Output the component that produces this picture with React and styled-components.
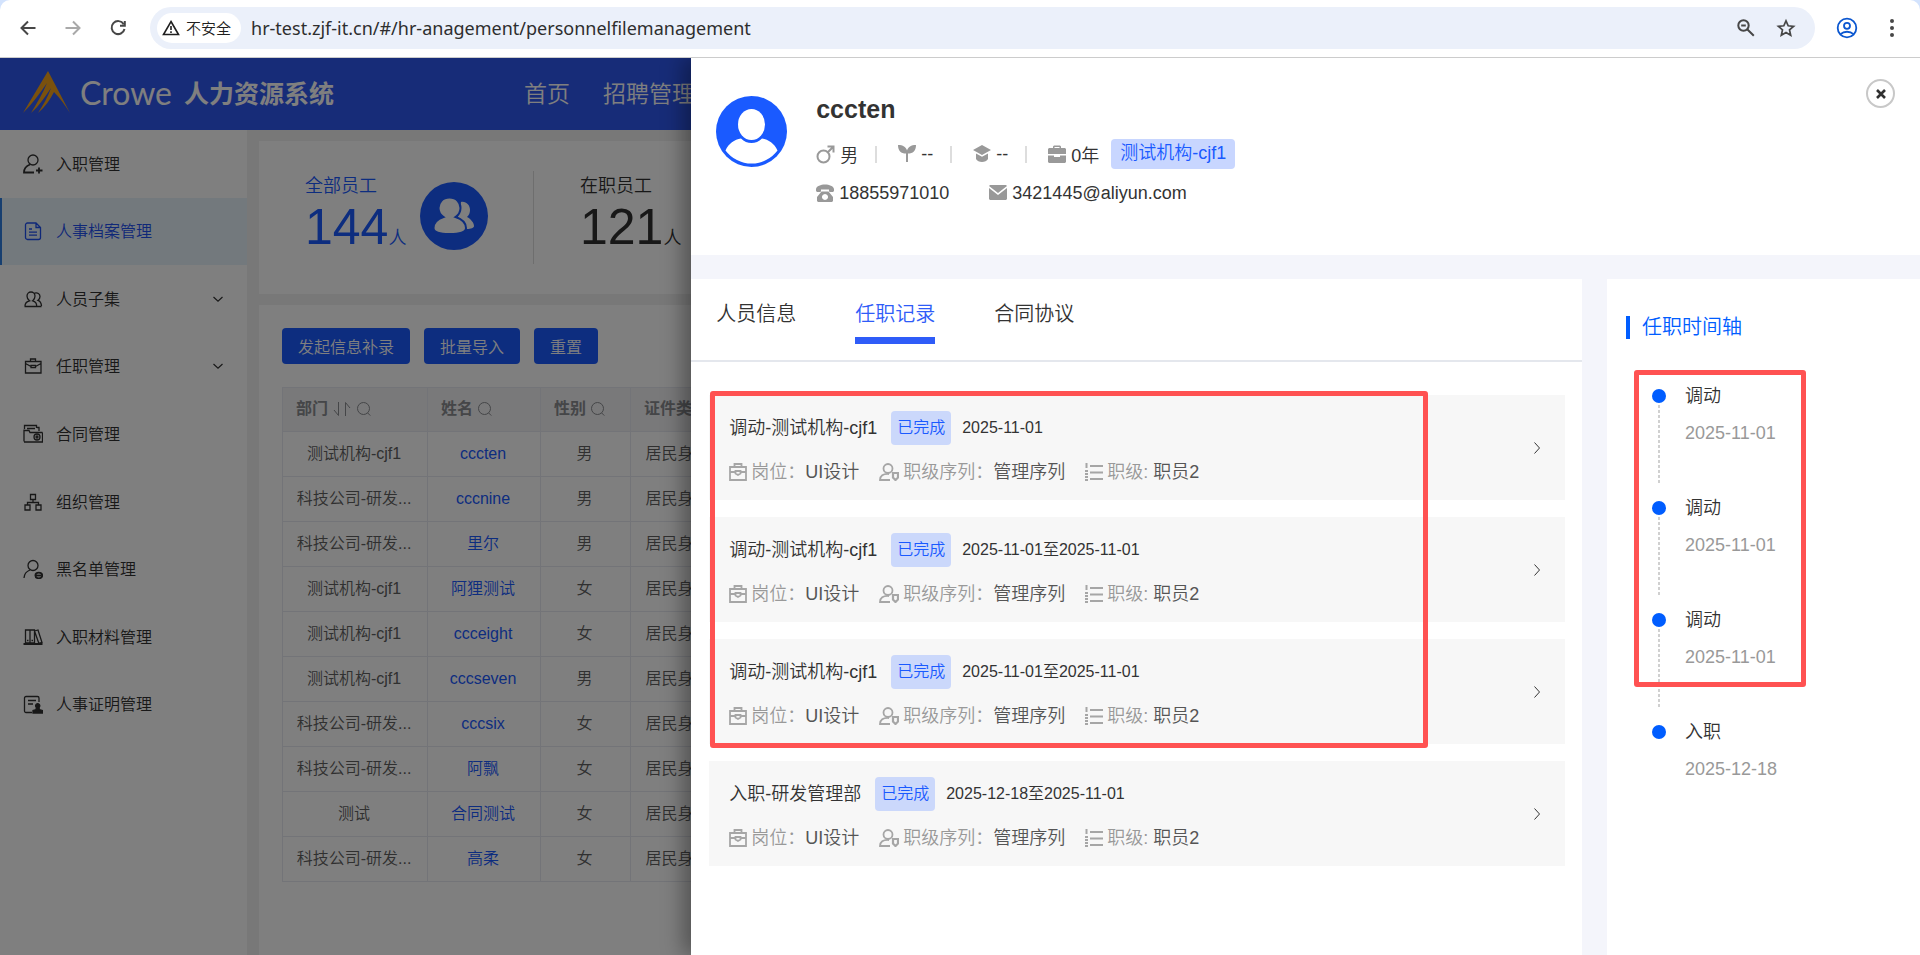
import React from "react";
import styled, { createGlobalStyle, css } from "styled-components";

const GlobalStyle = createGlobalStyle`
  * {
    box-sizing: border-box;
  }
  body {
    margin: 0;
    font-family: "Liberation Sans", "Noto Sans CJK SC", sans-serif;
    font-size: 16px;
    font-weight: 350;
    color: #333;
    overflow: hidden;
  }
  button, input {
    font-family: inherit;
    font-weight: inherit;
  }
  a {
    color: inherit;
    text-decoration: none;
  }
`;

const Page = styled.div`
  display: flex;
  flex-direction: column;
  height: 100vh;
  background: #d3e3fd;
`;

/* browser toolbar */
const Toolbar = styled.div`
  display: flex;
  align-items: center;
  height: 58px;
  padding: 0 16px 2px 16px;
  background: #fff;
  border-bottom: 1px solid #ccc;
  border-radius: 10px 10px 0 0;
`;

const ToolButton = styled.button`
  display: flex;
  align-items: center;
  justify-content: center;
  width: 24px;
  height: 24px;
  margin-right: ${p => p.$gap || 0}px;
  padding: 0;
  border: 0;
  background: none;
  color: ${p => p.$color || "#474747"};
`;

const AddressBar = styled.div`
  display: flex;
  align-items: center;
  flex: 1;
  height: 42px;
  margin: 0 20px 0 20px;
  padding: 0 17px 0 7px;
  border-radius: 21px;
  background: #ebf0fa;
`;

const Insecure = styled.button`
  display: flex;
  align-items: center;
  gap: 6px;
  height: 30px;
  padding: 0 10px 0 5px;
  border: 0;
  border-radius: 15px;
  background: #fff;
  color: #1f1f1f;
  font-size: 15px;
`;

const Url = styled.input`
  flex: 1;
  margin-left: 10px;
  padding: 0;
  border: 0;
  outline: 0;
  background: none;
  color: #2e2e2e;
  font-family: "Noto Sans", sans-serif;
  font-size: 18px;
  font-weight: 400;
`;

const Viewport = styled.div`
  position: relative;
  display: flex;
  flex-direction: column;
  flex: 1;
  min-height: 0;
  overflow: hidden;
  background: #f0f0f0;
`;

/* app header */
const Header = styled.header`
  display: flex;
  align-items: center;
  height: 72px;
  padding: 0 0 4px 23px;
  background: #2f58f0;
  color: #fff;
`;

const Brand = styled.span`
  margin-left: 10px;
  font-family: Lato, sans-serif;
  font-size: 32px;
  font-weight: 400;
`;

const SystemName = styled.h1`
  width: 340px;
  margin: 0 0 0 12px;
  font-size: 25px;
  font-weight: 700;
`;

const Nav = styled.nav`
  display: flex;
  gap: 33px;
  font-size: 23px;
  white-space: nowrap;
`;

const Body = styled.div`
  display: flex;
  flex: 1;
  min-height: 0;
`;

const Sidebar = styled.nav`
  width: 247px;
  flex-shrink: 0;
  background: #fff;
`;

const Menu = styled.ul`
  display: grid;
  grid-template-rows: repeat(9, 1fr);
  height: 608px;
  margin: 0;
  padding: 0;
  list-style: none;
`;

const MenuLink = styled.a`
  display: flex;
  align-items: center;
  gap: 13px;
  height: 100%;
  padding: 0 23px 0 21px;
  border-left: 2px solid transparent;
  color: #303030;
  ${p => p.$active && css`
    border-color: #2f7fe0;
    background: #e6f3fb;
    color: #1f50f0;
  `}
`;

const MenuText = styled.span`
  flex: 1;
  padding-bottom: 2px;
`;

const Main = styled.main`
  display: flex;
  flex-direction: column;
  flex: 1;
  min-width: 0;
  gap: 11px;
  padding: 11px 12px 0;
`;

const Card = styled.section`
  background: #fff;
  overflow: hidden;
`;

const Stats = styled(Card)`
  display: flex;
  height: 153px;
  padding: 30px 0 0 46px;
`;

const Stat = styled.div`
  display: flex;
  gap: 14px;
  width: 275px;
  color: ${p => p.$active ? "#1a5aff" : "#303030"};
  font-size: 18px;
`;

const StatRule = styled.div`
  width: 1px;
  height: 93px;
  margin-left: auto;
  margin-right: 46px;
  background: #dcdcdc;
`;

const StatValue = styled.div`
  line-height: 30px;
`;

const Big = styled.span`
  font-size: 50px;
  line-height: 52px;
`;

const StatIcon = styled.svg`
  margin-top: 11px;
`;

const TableCard = styled(Card)`
  flex: 1;
  padding: 23px 23px 0;
`;

const Actions = styled.div`
  display: flex;
  gap: 14px;
  margin-bottom: 23px;
`;

const Action = styled.button`
  height: 36px;
  padding: 0 16px;
  border: 0;
  border-radius: 4px;
  background: #1a5aff;
  color: #fff;
  font-size: 16px;
`;

const Table = styled.table`
  width: 100%;
  border-collapse: collapse;
  table-layout: fixed;
  border: 1px solid #e6e8f0;
  color: #606060;
  line-height: 22px;
`;

const Th = styled.th`
  width: ${p => p.$w ? `${p.$w}px` : "auto"};
  height: 44px;
  padding: 0 13px 2px;
  border: 1px solid #e6e8f0;
  background: #f2f2f4;
  color: #8a8c90;
  text-align: left;
  white-space: nowrap;
`;

const ThInner = styled.span`
  display: flex;
  align-items: center;
  gap: 4px;
`;

const Td = styled.td`
  height: 45px;
  padding: 0 15px 1px 13px;
  border: 1px solid #e6e8f0;
  text-align: center;
  white-space: nowrap;
`;

const NameLink = styled.a`
  color: #1a5aff;
`;

/* drawer */
const Mask = styled.div`
  position: absolute;
  inset: 0;
  background: rgba(0, 0, 0, 0.5);
`;

const Drawer = styled.aside`
  position: absolute;
  top: 0;
  right: 0;
  bottom: 0;
  display: flex;
  flex-direction: column;
  gap: 24px;
  width: 64%;
  background: #f4f5fb;
  box-shadow: -8px 0 20px rgba(0, 0, 0, 0.35);
`;

const Profile = styled.section`
  display: flex;
  align-items: flex-start;
  height: 197px;
  padding: 21px 25px 0 25px;
  background: #fff;
`;

const Avatar = styled.svg`
  margin-top: 17px;
  flex-shrink: 0;
`;

const ProfileInfo = styled.div`
  flex: 1;
  margin: 14px 0 0 29px;
  font-size: 18px;
`;

const Name = styled.h2`
  margin: 0;
  font-size: 25px;
  line-height: 32px;
`;

const Facts = styled.div`
  display: flex;
  align-items: center;
  height: ${p => p.$h}px;
  margin-top: ${p => p.$top}px;
`;

const Fact = styled.span`
  display: flex;
  align-items: center;
  gap: 5px;
  margin-right: ${p => p.$gap}px;
`;

const FactRule = styled.span`
  width: 2px;
  height: 17px;
  margin-right: 21px;
  background: #ddd;
`;

const OrgTag = styled.span`
  height: 30px;
  padding: 0 9px;
  border-radius: 4px;
  background: #c8d6ff;
  color: #1a5aff;
  line-height: 28px;
`;

const Close = styled.button`
  display: flex;
  align-items: center;
  justify-content: center;
  width: 29px;
  height: 29px;
  padding: 0;
  border: 2px solid #c8c8c8;
  border-radius: 50%;
  background: #fff;
  color: #303030;
`;

const Panels = styled.div`
  display: flex;
  flex: 1;
  gap: 25px;
`;

const RecordPanel = styled.section`
  position: relative;
  flex: 1;
  background: #fff;
`;

const Tabs = styled.div`
  display: flex;
  gap: 59px;
  height: 83px;
  padding: 20px 25px 0;
  border-bottom: 2px solid #e4e7ed;
`;

const Tab = styled.button`
  height: 45px;
  padding: 0 0 8px;
  border: 0;
  border-bottom: 7px solid ${p => p.$active ? "#2f5cf8" : "transparent"};
  background: none;
  color: ${p => p.$active ? "#2f5cf8" : "#333"};
  font-size: 20px;
  line-height: 30px;
`;

const Records = styled.div`
  display: flex;
  flex-direction: column;
  gap: 17px;
  padding: 33px 17px 0 18px;
`;

const Record = styled.article`
  display: flex;
  align-items: center;
  justify-content: space-between;
  height: 105px;
  padding: 0 22px 0 20px;
  background: #f7f7f7;
`;

const RecordHead = styled.div`
  display: flex;
  align-items: center;
  height: 34px;
  font-size: 18px;
  line-height: 34px;
`;

const Status = styled.span`
  margin: 0 11px 0 14px;
  padding: 0 6px;
  border-radius: 4px;
  background: #cbd8fb;
  color: #1a5aff;
  font-size: 16px;
`;

const RecordDate = styled.time`
  font-size: 16px;
`;

const RecordMeta = styled.dl`
  display: flex;
  gap: 20px;
  margin: 15px 0 0;
  font-size: 18px;
  line-height: 24px;
`;

const Meta = styled.div`
  display: flex;
  align-items: center;
`;

const MetaIcon = styled.svg`
  margin-right: 4px;
  fill: none;
  stroke: #a6a6a6;
`;

const MetaLabel = styled.dt`
  color: #999;
  white-space: pre;
`;

const MetaValue = styled.dd`
  margin: 0;
  color: #555;
`;

const TimelinePanel = styled.section`
  position: relative;
  width: 313px;
  padding: 37px 19px 0;
  background: #fff;
`;

const TimelineTitle = styled.h3`
  margin: 0 0 44px;
  padding-left: 12px;
  border-left: 4px solid #005dff;
  color: #005dff;
  font-size: 20px;
  font-weight: inherit;
  line-height: 23px;
`;

const Timeline = styled.ol`
  margin: 0;
  padding: 0 0 0 26px;
  list-style: none;
`;

const TimelineItem = styled.li`
  display: flex;
  gap: 19px;
  height: 112px;
`;

const Rail = styled.div`
  display: flex;
  flex-direction: column;
  align-items: center;
  gap: 2px;
  padding-top: 6px;
`;

const Dot = styled.span`
  width: 14px;
  height: 14px;
  border-radius: 50%;
  background: #005dff;
`;

const Dashes = styled.span`
  width: 2px;
  height: 80px;
  background: repeating-linear-gradient(#d0d0d0 0 3px, transparent 3px 5px);
`;

const Event = styled.div`
  font-size: 18px;
  line-height: 26px;
`;

const EventDate = styled.time`
  display: block;
  margin-top: 11px;
  color: #999;
`;

/* red frames lie over the records and the timeline */
const Frame = styled.div`
  position: absolute;
  top: ${p => p.$top}px;
  left: ${p => p.$left}px;
  width: ${p => p.$w}px;
  height: ${p => p.$h}px;
  border: 5px solid #ff5252;
  border-radius: 3px;
  pointer-events: none;
`;

const Line = ({ size = 20, box = 20, w = 1.3, children }) => (
  <svg width={size} height={size} viewBox={`0 0 ${box} ${box}`} fill="none" stroke="currentColor" strokeWidth={w}>
    {children}
  </svg>
);

const Solid = ({ size = 18, children }) => (
  <svg width={size} height={size} viewBox="0 0 18 18" fill="#999">
    {children}
  </svg>
);

const SearchIcon = () => (
  <Line size={16} box={16} w={1}>
    <circle cx="7.5" cy="7.5" r="6" />
    <path d="M11.5 11.8l2.8 2.8" />
  </Line>
);

const SortIcon = () => (
  <Line size={20} box={20} w={1}>
    <path d="M6.5 3v13.5L2 11M13.5 17V3.500L18 9" />
  </Line>
);

const ChevronDown = () => (
  <Line size={12} box={12} w={1.2}>
    <path d="M1.500 4L6 8.200 10.500 4" />
  </Line>
);

const menu = [
  { text: "入职管理", icon: <><circle cx="10" cy="6" r="5" /><path d="M7 10.500C3 12 1 15 1 18.500h10M16 13.500v6M13 16.500h6.500" strokeWidth="1.800" /></> },
  { text: "人事档案管理", active: true, icon: <path d="M4.500 2H13l4.500 4.500V16.500a2 2 0 0 1-2 2h-11a2 2 0 0 1-2-2V4a2 2 0 0 1 2-2zM13 2v4.500h4.500M6 8h3M6 11.200h8M6 14.200h8" /> },
  { text: "人员子集", arrow: true, icon: <path d="M1.500 17.500h17M2 17c0-3 1.800-4.500 4.500-5.200C4.500 10.500 4 8.800 4 7a4 4 0 0 1 8 0c0 1.800-.8 3.700-2.300 4.800 2.700.7 4 2.200 4 5.200M11.500 4.200c3-1.200 5.500.8 5.500 3.300 0 1.500-.8 3-2 3.800 2.200.7 3.300 2.500 3.500 5.700" /> },
  { text: "任职管理", arrow: true, icon: <path d="M2.500 5.500h15.500v11.500H2.500zM7.500 5.500V3h5v2.500M2.500 7.500L8 10.500M18 7.500L12.500 10.500M8 9.500h4.500v2.200H8z" /> },
  { text: "合同管理", icon: <><path d="M1 17.500V5.500M1 6.500h5l1 2h12.500M1 18h18.500V8.500M1.500 5V1.500h12v2.500M4 4.500h8M16 7V3.500h-2" /><circle cx="14" cy="13" r="3" /><circle cx="14" cy="13" r="1" /></> },
  { text: "组织管理", icon: <path d="M7.500 2.500h5v5h-5zM2 13h5v5H2zM13 13h5v5h-5zM10 7.500v3M4.500 13v-2.500h11V13" /> },
  { text: "黑名单管理", icon: <><circle cx="10" cy="6.500" r="5" /><path d="M7 11C3 12.500 1.200 15.500 1 19" /><ellipse cx="15.800" cy="16.500" rx="3.400" ry="2.800" strokeWidth="1.800" /><path d="M13 16.500h5.600" strokeWidth="1.800" /></> },
  { text: "入职材料管理", icon: <><path d="M2.500 3h4.500v13H2.500zM7 3h4.500v13H7zM11.500 4l3.500-1 4 12.500-3.200.8zM4 13.500h1.500M8.500 13.500h1.500" /><path d="M.5 17h19" strokeWidth="2" /></> },
  { text: "人事证明管理", icon: <><path d="M9 18.500H3a1.500 1.500 0 0 1-1.500-1.500V4A1.500 1.500 0 0 1 3 2.500h11.500A1.500 1.500 0 0 1 16 4v4M5 6.500h8M5 10h5" /><path fill="currentColor" d="M10 19v-2.500l3.200-1V13a2 2 0 1 1 3 0v2.500l3.200 1V19z" /></> },
];

const rows = [
  ["测试机构-cjf1", "cccten", "男"],
  ["科技公司-研发...", "cccnine", "男"],
  ["科技公司-研发...", "里尔", "男"],
  ["测试机构-cjf1", "阿狸测试", "女"],
  ["测试机构-cjf1", "ccceight", "女"],
  ["测试机构-cjf1", "cccseven", "男"],
  ["科技公司-研发...", "cccsix", "女"],
  ["科技公司-研发...", "阿飘", "女"],
  ["测试", "合同测试", "女"],
  ["科技公司-研发...", "高柔", "女"],
];

const records = [
  { title: "调动-测试机构-cjf1", date: "2025-11-01" },
  { title: "调动-测试机构-cjf1", date: "2025-11-01至2025-11-01" },
  { title: "调动-测试机构-cjf1", date: "2025-11-01至2025-11-01" },
  { title: "入职-研发管理部", date: "2025-12-18至2025-11-01" },
];

const events = [
  { text: "调动", date: "2025-11-01" },
  { text: "调动", date: "2025-11-01" },
  { text: "调动", date: "2025-11-01" },
  { text: "入职", date: "2025-12-18" },
];

const BrowserBar = () => (
  <Toolbar>
    <ToolButton $gap={21} aria-label="后退">
      <Line w={2}><path d="M17.500 10H4M10 3.500L3.500 10l6.500 6.500" /></Line>
    </ToolButton>
    <ToolButton $gap={21} $color="#a9a9a9" aria-label="前进">
      <Line w={2}><path d="M2.500 10H16M10 3.500l6.500 6.500-6.500 6.500" /></Line>
    </ToolButton>
    <ToolButton aria-label="刷新">
      <Line w={2}><path d="M15.700 6.200A6.500 6.500 0 1 0 16.500 11M16.800 3v4.800H12" /></Line>
    </ToolButton>
    <AddressBar>
      <Insecure>
        <Line size={18} box={18} w={1.6}>
          <path d="M9 2.500L16.500 15.500h-15zM9 7v4M9 12.300v1.600" />
        </Line>
        不安全
      </Insecure>
      <Url aria-label="地址" defaultValue="hr-test.zjf-it.cn/#/hr-anagement/personnelfilemanagement" />
      <ToolButton $gap={16} aria-label="缩放">
        <Line w={2}><circle cx="7.500" cy="7.500" r="5.200" /><path d="M11.200 11.200l6.600 6.600M5.200 7.500h4.600" /></Line>
      </ToolButton>
      <ToolButton aria-label="收藏">
        <Line w={1.7}><path d="M10 2.800l2.200 5 5.400.5-4.100 3.600 1.200 5.300-4.700-2.800-4.700 2.800 1.200-5.300-4.100-3.600 5.400-.5z" /></Line>
      </ToolButton>
    </AddressBar>
    <ToolButton $gap={21} $color="#0b57d0" aria-label="用户">
      <Line size={22} box={22} w={1.8}>
        <circle cx="11" cy="11" r="9.300" /><circle cx="11" cy="8.800" r="3" /><path d="M4.500 17.200c3.500-3.300 9.500-3.300 13 0" />
      </Line>
    </ToolButton>
    <ToolButton aria-label="菜单">
      <svg width="20" height="20" fill="currentColor">
        <circle cx="10" cy="3" r="2" /><circle cx="10" cy="10" r="2" /><circle cx="10" cy="17" r="2" />
      </svg>
    </ToolButton>
  </Toolbar>
);

const Employees = () => (
  <Table>
    <thead>
      <tr>
        <Th $w={145}><ThInner>部门<SortIcon /><SearchIcon /></ThInner></Th>
        <Th $w={113}><ThInner>姓名<SearchIcon /></ThInner></Th>
        <Th $w={90}><ThInner>性别<SearchIcon /></ThInner></Th>
        <Th $w={112}>证件类型</Th>
        <Th />
      </tr>
    </thead>
    <tbody>
      {rows.map(([dept, name, sex]) => (
        <tr key={name}>
          <Td>{dept}</Td>
          <Td><NameLink href="#">{name}</NameLink></Td>
          <Td>{sex}</Td>
          <Td>居民身份证</Td>
          <Td />
        </tr>
      ))}
    </tbody>
  </Table>
);

const ProfileHead = () => (
  <Profile>
    <Avatar width="71" height="71" viewBox="0 0 71 71">
      <circle cx="35.500" cy="35.500" r="35.500" fill="#1a5aff" />
      <ellipse cx="35.500" cy="28.500" rx="13.500" ry="15.500" fill="#fff" />
      <path d="M9.500 54.500c3-7 9-11 15.500-12 6 6 15 6 21 0 6.500 1 12.500 5 15.500 12a32.500 32.500 0 0 1-52 0z" fill="#fff" />
    </Avatar>
    <ProfileInfo>
      <Name>cccten</Name>
      <Facts $h={32} $top={13}>
        <Fact $gap={17}>
          <svg width="19" height="19" fill="none" stroke="#999" strokeWidth="2">
            <circle cx="7.500" cy="11.500" r="6" /><path d="M11.800 7.200L17 2M11.500 1.500h6v6" />
          </svg>
          男
        </Fact>
        <FactRule />
        <Fact $gap={17}>
          <Solid><path d="M0 0c5 0 8 2 9 5.500C10 2 13 0 18 0c0 6-3 8.500-8 8.500V17H8V8.500C3 8.500 0 6 0 0z" /></Solid>
          --
        </Fact>
        <FactRule />
        <Fact $gap={17}>
          <Solid><path d="M9 0l9 5-9 5-9-5zM3 8.500l6 3.300 6-3.300V14c-2 4-10 4-12 0z" /></Solid>
          --
        </Fact>
        <FactRule />
        <Fact $gap={12}>
          <Solid><path d="M5 3V1.500L6 .5h6l1 1V3h4l1 1v5H0V4l1-1zm1.500 0h5V2h-5zM0 10.500h6v1.500h6v-1.500h6V17l-1 1H1l-1-1z" /></Solid>
          0年
        </Fact>
        <OrgTag>测试机构-cjf1</OrgTag>
      </Facts>
      <Facts $h={24} $top={11}>
        <Fact $gap={40}>
          <Solid><path d="M0 7V5c1-6 17-6 18 0v2l-1 1h-3.500l-.5-1V5.500H5V7l-.5 1H1zM5.500 7.500h7l4.500 5.500v4l-1 1H2l-1-1v-4zM9 10a3 3 0 1 0 .01 0z" fillRule="evenodd" /></Solid>
          18855971010
        </Fact>
        <Fact $gap={0}>
          <Solid><path d="M1 1h16l1 1-9 7-9-7zM0 4l9 7 9-7v11l-1 1H1l-1-1z" /></Solid>
          3421445@aliyun.com
        </Fact>
      </Facts>
    </ProfileInfo>
    <Close aria-label="关闭">
      <Line size={12} box={12} w={2.6}><path d="M2 2l8 8M10 2l-8 8" /></Line>
    </Close>
  </Profile>
);

const RecordRow = ({ title, date }) => (
  <Record>
    <div>
      <RecordHead>
        {title}
        <Status>已完成</Status>
        <RecordDate>{date}</RecordDate>
      </RecordHead>
      <RecordMeta>
        <Meta>
          <MetaIcon width="18" height="18" strokeWidth="1.800">
            <path d="M1 4h16v13H1zM5.500 4V1h7v3M1 9h5M12 9h5M6.500 8h5v2.500L9 12 6.500 10.500z" />
          </MetaIcon>
          <MetaLabel>岗位：</MetaLabel>
          <MetaValue>UI设计</MetaValue>
        </Meta>
        <Meta>
          <MetaIcon width="20" height="18" strokeWidth="1.800">
            <circle cx="9" cy="5.500" r="4.500" /><path d="M11 17H1c0-4 3-6.500 9-6" />
            <path d="M14 10h5v4.500l-2.500 2.500-2.500-2.500z" strokeWidth="2.200" />
          </MetaIcon>
          <MetaLabel>职级序列：</MetaLabel>
          <MetaValue>管理序列</MetaValue>
        </Meta>
        <Meta>
          <MetaIcon width="18" height="18" strokeWidth="2">
            <path d="M5 3h13M5 9.500h13M5 16h13M1.500 0v5M0 8h3M0 11h3M0 14h3M0 17h3" />
          </MetaIcon>
          <MetaLabel>{"职级: "}</MetaLabel>
          <MetaValue>职员2</MetaValue>
        </Meta>
      </RecordMeta>
    </div>
    <Line size={12} box={12} w={1}><path d="M3.500 0.500L8.500 6l-5 5.500" /></Line>
  </Record>
);

export default () => (
  <Page>
    <GlobalStyle />
    <BrowserBar />
    <Viewport>
      <Header>
        <svg width="47" height="42" viewBox="0 0 47 42" fill="#f5a31a">
          <path d="M25 0L47 42C42 34 37 27 31 21 27 29 22 36 15 42 20 34 25 26 28 17 22 26 16 35 8 42 14 32 20 22 24 12 17 22 9 33 0 42z" />
        </svg>
        <Brand>Crowe</Brand>
        <SystemName>人力资源系统</SystemName>
        <Nav>
          <a href="#">首页</a>
          <a href="#">招聘管理</a>
        </Nav>
      </Header>
      <Body>
        <Sidebar>
          <Menu>
            {menu.map(m => (
              <li key={m.text}>
                <MenuLink href="#" $active={m.active}>
                  <Line>{m.icon}</Line>
                  <MenuText>{m.text}</MenuText>
                  {m.arrow && <ChevronDown />}
                </MenuLink>
              </li>
            ))}
          </Menu>
        </Sidebar>
        <Main>
          <Stats>
            <Stat $active>
              <StatValue>全部员工<br /><Big>144</Big>人</StatValue>
              <StatIcon width="68" height="68" viewBox="0 0 68 68">
                <circle cx="34" cy="34" r="34" fill="#1a5aff" />
                <path d="M41 20c5-1 9 3 9 8 0 3-1 5-3 7 4 2 7 6 7 9 0 2-3 3-7 3l-9-12z" fill="#fff" />
                <path d="M29.500 15.500c7 0 11 5 11 10.500 0 4-2 7-5 9 6 2 10.500 6 10.500 11 0 4-5 6-16.500 6S13.500 50 13.500 46c0-5 4-9 10-11-3-2-5-5-5-9 0-5.500 4-10.500 11-10.500z" fill="#fff" stroke="#1a5aff" strokeWidth="2" />
              </StatIcon>
              <StatRule />
            </Stat>
            <Stat>
              <StatValue>在职员工<br /><Big>121</Big>人</StatValue>
            </Stat>
          </Stats>
          <TableCard>
            <Actions>
              <Action>发起信息补录</Action>
              <Action>批量导入</Action>
              <Action>重置</Action>
            </Actions>
            <Employees />
          </TableCard>
        </Main>
      </Body>
      <Mask />
      <Drawer>
        <ProfileHead />
        <Panels>
          <RecordPanel>
            <Tabs>
              <Tab>人员信息</Tab>
              <Tab $active>任职记录</Tab>
              <Tab>合同协议</Tab>
            </Tabs>
            <Records>
              {records.map((r, i) => <RecordRow key={i} {...r} />)}
            </Records>
            <Frame $top={112} $left={19} $w={718} $h={357} />
          </RecordPanel>
          <TimelinePanel>
            <TimelineTitle>任职时间轴</TimelineTitle>
            <Timeline>
              {events.map((e, i) => (
                <TimelineItem key={i}>
                  <Rail>
                    <Dot />
                    {i < events.length - 1 && <Dashes />}
                  </Rail>
                  <Event>
                    {e.text}
                    <EventDate>{e.date}</EventDate>
                  </Event>
                </TimelineItem>
              ))}
            </Timeline>
            <Frame $top={91} $left={27} $w={172} $h={317} />
          </TimelinePanel>
        </Panels>
      </Drawer>
    </Viewport>
  </Page>
);
